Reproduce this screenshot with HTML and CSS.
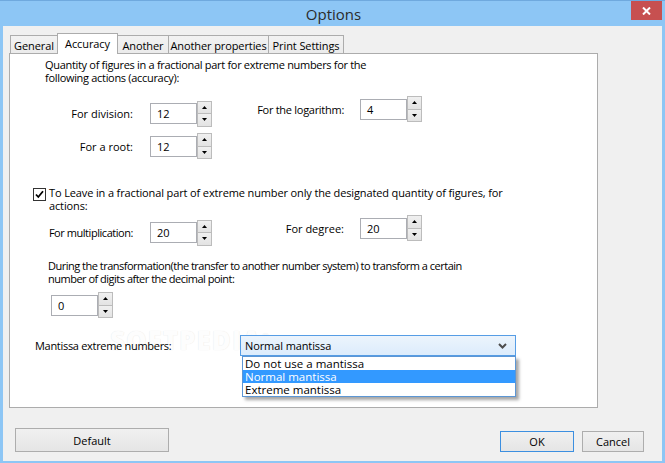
FILE: index.html
```html
<!DOCTYPE html>
<html>
<head>
<meta charset="utf-8">
<link rel="stylesheet" href="styles.css">
</head>
<body>
<div class="window">
  <div class="titlebar">
    <span></span>
    <span class="title">Options</span>
    <span class="close"><svg width="9" height="8" viewBox="0 0 9 8"><path d="M1 0.5 L8 7.5 M8 0.5 L1 7.5" stroke="#fff" stroke-width="2"/></svg></span>
  </div>
  <div class="client">
    <div class="tabs">
      <span class="tab t-general">General</span>
      <span class="tab tab-sel t-acc">Accuracy</span>
      <span class="tab t-another">Another</span>
      <span class="tab t-props">Another properties</span>
      <span class="tab t-print">Print Settings</span>
    </div>
    <div class="panel">
      <div class="watermark">SOFTPEDIA<sup>®</sup></div>
      <p class="para p1">Quantity of figures in a fractional part for extreme numbers for the<br>following actions (accuracy):</p>

      <div class="row r1">
        <span class="lab lab-left">For division:</span>
        <span class="spin"><span class="box">12</span><span class="arrows"><span class="arr"><svg width="5" height="3" viewBox="0 0 5 3"><path d="M0 3 L2.5 0 L5 3Z" fill="#000"/></svg></span><span class="arr"><svg width="5" height="3" viewBox="0 0 5 3"><path d="M0 0 L2.5 3 L5 0Z" fill="#000"/></svg></span></span></span>
        <span class="group-right">
          <span class="lab lab-right lab-log">For the logarithm:</span>
          <span class="spin"><span class="box">4</span><span class="arrows"><span class="arr"><svg width="5" height="3" viewBox="0 0 5 3"><path d="M0 3 L2.5 0 L5 3Z" fill="#000"/></svg></span><span class="arr"><svg width="5" height="3" viewBox="0 0 5 3"><path d="M0 0 L2.5 3 L5 0Z" fill="#000"/></svg></span></span></span>
        </span>
      </div>

      <div class="row r2">
        <span class="lab lab-left">For a root:</span>
        <span class="spin"><span class="box">12</span><span class="arrows"><span class="arr"><svg width="5" height="3" viewBox="0 0 5 3"><path d="M0 3 L2.5 0 L5 3Z" fill="#000"/></svg></span><span class="arr"><svg width="5" height="3" viewBox="0 0 5 3"><path d="M0 0 L2.5 3 L5 0Z" fill="#000"/></svg></span></span></span>
      </div>

      <div class="check-para">
        <span class="checkbox"><svg width="13" height="13" viewBox="0 0 13 13"><rect x="0.5" y="0.5" width="12" height="12" fill="#fff" stroke="#333"/><path d="M3 6.5 L5.3 9 L10 3.3" fill="none" stroke="#000" stroke-width="1.8"/></svg></span>
        <span class="check-text">To Leave in a fractional part of extreme number only the designated quantity of figures, for<br>actions:</span>
      </div>

      <div class="row r3">
        <span class="lab lab-left lab-mult">For multiplication:</span>
        <span class="spin"><span class="box">20</span><span class="arrows"><span class="arr"><svg width="5" height="3" viewBox="0 0 5 3"><path d="M0 3 L2.5 0 L5 3Z" fill="#000"/></svg></span><span class="arr"><svg width="5" height="3" viewBox="0 0 5 3"><path d="M0 0 L2.5 3 L5 0Z" fill="#000"/></svg></span></span></span>
        <span class="group-right">
          <span class="lab lab-right">For degree:</span>
          <span class="spin"><span class="box">20</span><span class="arrows"><span class="arr"><svg width="5" height="3" viewBox="0 0 5 3"><path d="M0 3 L2.5 0 L5 3Z" fill="#000"/></svg></span><span class="arr"><svg width="5" height="3" viewBox="0 0 5 3"><path d="M0 0 L2.5 3 L5 0Z" fill="#000"/></svg></span></span></span>
        </span>
      </div>

      <p class="para p2">During the transformation(the transfer to another number system) to transform a certain<br>number of digits after the decimal point:</p>

      <div class="row r4">
        <span class="spin"><span class="box">0</span><span class="arrows"><span class="arr"><svg width="5" height="3" viewBox="0 0 5 3"><path d="M0 3 L2.5 0 L5 3Z" fill="#000"/></svg></span><span class="arr"><svg width="5" height="3" viewBox="0 0 5 3"><path d="M0 0 L2.5 3 L5 0Z" fill="#000"/></svg></span></span></span>
      </div>

      <div class="row r5">
        <span class="lab mant-lab">Mantissa extreme numbers:</span>
        <div class="combo-wrap">
          <div class="combo">
            <span>Normal mantissa</span>
            <svg width="9" height="6" viewBox="0 0 9 6"><path d="M1 1 L4.5 4.5 L8 1" fill="none" stroke="#4d4d4d" stroke-width="2"/></svg>
          </div>
          <ul class="droplist">
            <li>Do not use a mantissa</li>
            <li class="sel">Normal mantissa</li>
            <li>Extreme mantissa</li>
          </ul>
        </div>
      </div>
    </div>
    <div class="footer">
      <span class="btn btn-default">Default</span>
      <span class="spacer"></span>
      <span class="btn btn-ok">OK</span>
      <span class="btn btn-cancel">Cancel</span>
    </div>
  </div>
</div>
</body>
</html>
```

FILE: styles.css
```css
* { box-sizing: border-box; }
html, body { margin: 0; padding: 0; }
body {
  width: 665px;
  height: 463px;
  overflow: hidden;
  font-family: "Open Sans", "Noto Sans", sans-serif;
  font-size: 11px;
  color: #000;
}
.window {
  width: 665px;
  height: 463px;
  background: #8dc6f5;
  border-top: 1px solid #6fa9de;
  display: flex;
  flex-direction: column;
}
.titlebar {
  height: 25px;
  display: grid;
  grid-template-columns: 1fr auto 1fr;
  align-items: start;
}
.title {
  font-size: 15px;
  color: #2b2b2b;
  line-height: 26px;
  margin-left: 2px;
}
.close {
  justify-self: end;
  width: 31px;
  height: 19px;
  margin-right: 3px;
  background: #c75050;
  display: flex;
  align-items: center;
  justify-content: center;
}
.client {
  margin: 0 3px 2px 3px;
  flex: 1;
  background: #f0f0f0;
  display: flex;
  flex-direction: column;
}
.tabs {
  height: 20px;
  margin-top: 7px;
  margin-left: 7px;
  display: flex;
  align-items: flex-end;
  letter-spacing: -0.1px;
}
.tab {
  height: 18px;
  border: 1px solid #acacac;
  border-bottom: none;
  margin-right: -1px;
  background: linear-gradient(#f2f2f2, #ebebeb);
  display: flex;
  align-items: center;
  justify-content: center;
  line-height: 1;
  padding-top: 1px;
  white-space: nowrap;
}
.t-general { width: 48px; }
.t-acc { width: 61px; }
.t-another { width: 52px; }
.t-props { width: 101px; }
.t-print { width: 76px; }
.tab-sel {
  height: 21px;
  margin-bottom: -1px;
  background: #fff;
  position: relative;
  z-index: 2;
  padding-top: 0;
  padding-bottom: 2px;
}
.panel {
  position: relative;
  z-index: 0;
  margin-left: 6px;
  width: 589px;
  height: 355px;
  background: #fff;
  border: 1px solid #acacac;
  padding-top: 4px;
}
.para {
  margin: 0;
  line-height: 13px;
  white-space: nowrap;
}
.p1 { margin-left: 35px; letter-spacing: -0.31px; }
.row {
  display: flex;
  align-items: center;
}
.lab { white-space: nowrap; line-height: 13px; }
.lab-left {
  width: 123px;
  text-align: right;
  margin-right: 17px;
}
.lab-mult { letter-spacing: -0.45px; }
.lab-log { letter-spacing: -0.28px; }
.lab-right {
  width: 132px;
  text-align: right;
  margin-right: 16px;
}
.group-right {
  display: flex;
  align-items: center;
  margin-bottom: 9px;
}
.r1 { margin-top: 12px; }
.r2 { margin-top: 2px; }
.spin {
  display: flex;
  align-items: center;
}
.box {
  width: 47px;
  height: 21px;
  border: 1px solid #abadb3;
  background: #fff;
  padding-left: 6px;
  display: flex;
  align-items: center;
}
.arrows {
  width: 15px;
  height: 26px;
  display: flex;
  flex-direction: column;
}
.arr {
  flex: 1;
  border: 1px solid #bcbcbc;
  background: linear-gradient(#f0f0f0, #e3e3e3);
  display: flex;
  align-items: center;
  justify-content: center;
}
.arr + .arr { border-top: none; }
.check-para {
  margin-top: 27px;
  margin-left: 23px;
  display: flex;
  align-items: flex-start;
}
.checkbox {
  width: 13px;
  height: 13px;
  margin-top: 2px;
  margin-right: 3px;
  display: flex;
}
.check-text {
  line-height: 13px;
  white-space: nowrap;
  letter-spacing: -0.13px;
}
.r3 { margin-top: 3px; }
.p2 { margin-top: 9px; margin-left: 38px; letter-spacing: -0.5px; }
.r4 { margin-top: 7px; margin-left: 41px; }
.r5 { margin-top: 17px; align-items: flex-start; }
.mant-lab {
  margin-left: 25px;
  width: 205px;
  line-height: 21px;
  letter-spacing: -0.3px;
}
.combo-wrap {
  position: relative;
}
.combo {
  width: 276px;
  height: 21px;
  border: 1px solid #569de5;
  background: linear-gradient(#ecf4fc, #dcecfc);
  display: flex;
  align-items: center;
  justify-content: space-between;
  padding: 0 8px 0 4px;
  letter-spacing: -0.1px;
}
.droplist {
  position: absolute;
  left: 2px;
  top: 21px;
  width: 274px;
  margin: 0;
  padding: 0;
  list-style: none;
  background: #fff;
  border: 1px solid #5c96d4;
  box-shadow: 3px 3px 3px rgba(0, 0, 0, 0.35);
  z-index: 3;
}
.droplist li {
  height: 13px;
  line-height: 13px;
  padding-left: 2px;
  font-size: 11.5px;
}
.droplist li.sel {
  background: #3399ff;
  color: #fff;
}
.watermark {
  position: absolute;
  left: 100px;
  top: 268px;
  font-family: "Open Sans", sans-serif;
  font-weight: 800;
  font-size: 26px;
  letter-spacing: 1px;
  color: #fdfdfd;
  text-shadow: 0 0 1px #e2e2e2;
  z-index: -1;
}
.watermark sup { font-size: 9px; font-weight: 400; }
.footer {
  flex: 1;
  display: flex;
  align-items: flex-end;
  padding: 0 18px 9px 12px;
  gap: 8px;
}
.spacer { flex: 1; }
.btn {
  height: 21px;
  border: 1px solid #adadad;
  background: linear-gradient(#f0f0f0, #e5e5e5);
  display: flex;
  align-items: center;
  justify-content: center;
}
.btn-default { width: 154px; height: 24px; }
.btn-ok { width: 74px; border-color: #3c8fe0; }
.btn-cancel { width: 62px; }
```
